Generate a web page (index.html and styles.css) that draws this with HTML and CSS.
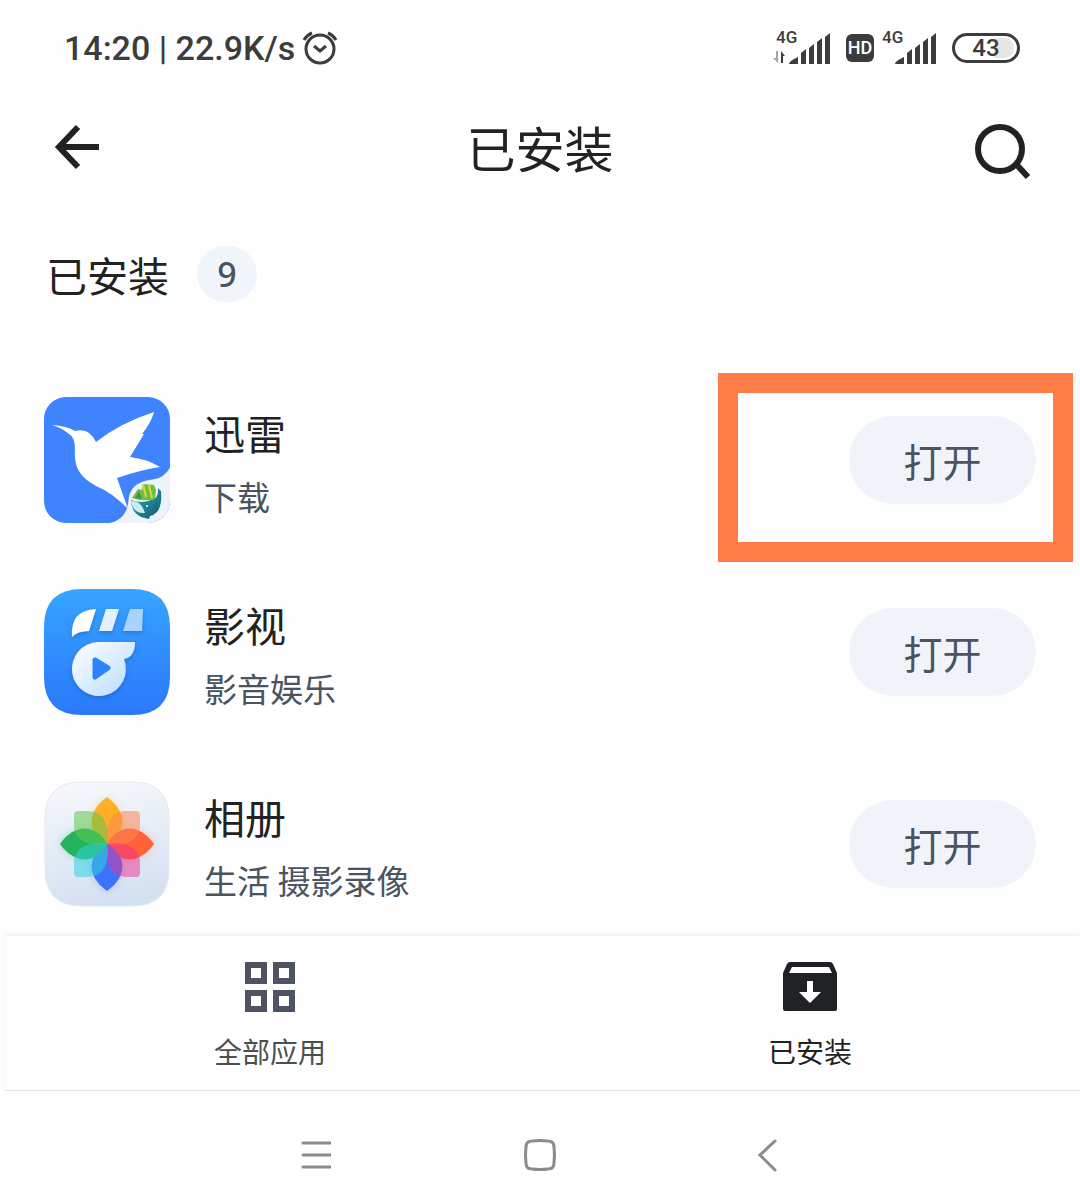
FILE: index.html
```html
<!DOCTYPE html>
<html lang="zh-CN">
<head>
  <meta charset="UTF-8">
  <meta name="viewport" content="width=device-width, initial-scale=1">
  <title>已安装</title>
  <link rel="stylesheet" href="styles.css">
</head>
<body>
  <div class="status">
    <div class="status-left">
      <span>14:20 | 22.9K/s</span>
      <svg width="36" height="36" viewBox="0 0 36 36" fill="none" stroke="#3c3c3c" stroke-width="3">
        <circle cx="18" cy="19" r="14"/>
        <path d="M12 16l6 5 6-5M2 10Q5 5 10 3M34 10Q31 5 26 3"/>
      </svg>
    </div>
    <div class="status-right">
      <div class="signal">
        <span>4G</span>
        <svg width="58" height="34" viewBox="0 0 58 34" fill="#3c3c3c">
          <path d="M17 33q0-3 9-7v7zM29 22l5-4v15h-5zM37 17l5-4v20h-5zM45 11l5-4v26h-5zM53 6l5-4v31h-5z"/>
          <path d="M9 32V20l4 5h-2v7z"/><path d="M6 20v12l-5-5h3v-7z" fill="#a5a5a5"/>
        </svg>
      </div>
      <span class="hd">HD</span>
      <div class="signal">
        <span>4G</span>
        <svg width="58" height="34" viewBox="0 0 58 34" fill="#3c3c3c">
          <path d="M17 33q0-3 9-7v7zM29 22l5-4v15h-5zM37 17l5-4v20h-5zM45 11l5-4v26h-5zM53 6l5-4v31h-5z"/>
        </svg>
      </div>
      <span class="battery">43</span>
    </div>
  </div>

  <header class="header">
    <button class="icon-btn" aria-label="返回">
      <svg width="60" height="60" viewBox="0 0 60 60" fill="none" stroke="#222" stroke-width="6">
        <path d="M32 7L13 27l19 20M13 27h40"/>
      </svg>
    </button>
    <h1>已安装</h1>
    <button class="icon-btn" aria-label="搜索">
      <svg width="60" height="60" viewBox="0 0 60 60" fill="none" stroke="#222" stroke-width="6">
        <circle cx="26" cy="29" r="22"/>
        <path d="M42 44l12 13"/>
      </svg>
    </button>
  </header>

  <main>
    <div class="section-title">
      <h2>已安装</h2>
      <span class="count">9</span>
    </div>

    <ul class="apps">
      <li class="app">
        <svg class="app-icon" viewBox="0 0 126 126">
          <defs>
            <clipPath id="c1"><rect width="126" height="126" rx="22"/></clipPath>
            <linearGradient id="whale" x1="0" y1="0" x2="1" y2="1">
              <stop offset="0" stop-color="#39b3b6"/><stop offset="1" stop-color="#0a5873"/>
            </linearGradient>
          </defs>
          <g clip-path="url(#c1)">
            <rect width="126" height="126" fill="#4083ff"/>
            <path d="M8 28Q23 29 31 34Q45 30 52 45Q76 26 110 15Q107 26 98 37L100 37L86 60Q103 62 116 70Q96 73 73 81L84 112Q69 96 52 89C34 79 30 68 31 53Q31 40 25 37Q18 31 8 28z" fill="#fff"/>
            <path d="M126 70Q120 81 109 82Q84 85 84 105Q82 123 64 126H126z" fill="#edf3f8"/>
            <path d="M126 70Q120 81 109 82Q84 85 84 105Q82 123 64 126" fill="none" stroke="#2b65c9" stroke-width="1" opacity=".5"/>
            <path d="M87 103Q98 107 107 103Q115 102 114 91L117 94Q119 116 106 119L105 122L97 120Q87 115 87 103z" fill="url(#whale)"/>
            <path d="M87 104Q97 103 101 116Q89 117 87 104z" fill="#c7edf4"/>
            <path d="M88 101L94 92L98 93L99 87L110 88L112 93L111 102Q100 105 88 101z" fill="#70bd40"/>
            <path d="M99 87l3 13M105 88l3 13" stroke="#d5d944" stroke-width="2"/>
            <path d="M91 101l4-7 3 8z" fill="#2e9b57"/>
            <circle cx="103" cy="109" r="1" fill="#fff"/>
          </g>
        </svg>
        <div class="info">
          <h3>迅雷</h3>
          <p>下载</p>
        </div>
        <div class="action">
          <button class="open">打开</button>
          <span class="highlight"></span>
        </div>
      </li>
      <li class="app">
        <svg class="app-icon" viewBox="0 0 126 126">
          <defs>
            <linearGradient id="bg2" x1="0" y1="0" x2="0" y2="1">
              <stop offset="0" stop-color="#37a4ff"/><stop offset="1" stop-color="#2b78fb"/>
            </linearGradient>
            <linearGradient id="w2" x1="0" y1="0" x2="1" y2="1">
              <stop offset="0" stop-color="#fff"/><stop offset="1" stop-color="#b5dcff"/>
            </linearGradient>
            <filter id="sh2" x="-20%" y="-20%" width="140%" height="140%">
              <feDropShadow dx="0" dy="2" stdDeviation="2" flood-color="#1556b8" flood-opacity=".5"/>
            </filter>
          </defs>
          <path d="M0 38Q0 0 38 0H88Q126 0 126 38V88Q126 126 88 126H38Q0 126 0 88z" fill="url(#bg2)"/>
          <g filter="url(#sh2)">
            <path d="M52 20L45 42Q33 42 28 48Q26 21 52 20z" fill="#fff"/>
            <path d="M62 20H75L68 42H55z" fill="#e3f1ff"/>
            <path d="M86 20H99L98 42H79z" fill="#a9d4ff"/>
            <path d="M54 53H91Q91 68 80 70A27 27 0 1 1 54 53z" fill="url(#w2)"/>
          </g>
          <path d="M51 71L64 79L51 88z" fill="#2e82fc" stroke="#2e82fc" stroke-width="5" stroke-linejoin="round"/>
        </svg>
        <div class="info">
          <h3>影视</h3>
          <p>影音娱乐</p>
        </div>
        <div class="action">
          <button class="open">打开</button>
        </div>
      </li>
      <li class="app">
        <svg class="app-icon" viewBox="0 0 126 126">
          <defs>
            <linearGradient id="bg3" x1=".4" y1="0" x2=".6" y2="1">
              <stop offset="0" stop-color="#f5f7fb"/><stop offset="1" stop-color="#d3e0f0"/>
            </linearGradient>
            <filter id="glow" x="-30%" y="-30%" width="160%" height="160%">
              <feGaussianBlur stdDeviation="5"/>
            </filter>
            <path id="petal" d="M63 63C43 52 42 31 63 16C84 31 83 52 63 63z"/>
            <path id="leaf" d="M30 34Q30 30 34 30H44C59 30 66 44 63 63C44 66 30 59 30 44z"/>
          </defs>
          <path d="M1 38Q1 1 38 1H88Q125 1 125 38V88Q125 125 88 125H38Q1 125 1 88z" fill="url(#bg3)" stroke="#e3e9f1"/>
          <g filter="url(#glow)" opacity=".3">
            <use href="#petal" fill="#f8b62f"/>
            <use href="#petal" fill="#ff6640" transform="rotate(90 63 63)"/>
            <use href="#petal" fill="#3f7aff" transform="rotate(180 63 63)"/>
            <use href="#petal" fill="#16b65c" transform="rotate(270 63 63)"/>
          </g>
          <use href="#petal" fill="#fbb025"/>
          <use href="#petal" fill="#ff6238" transform="rotate(90 63 63)"/>
          <use href="#petal" fill="#3b74fb" transform="rotate(180 63 63)"/>
          <use href="#petal" fill="#22b35c" transform="rotate(270 63 63)"/>
          <use href="#leaf" fill="#60c84e" opacity=".55"/>
          <use href="#leaf" fill="#ff8652" opacity=".55" transform="rotate(90 63 63)"/>
          <use href="#leaf" fill="#f02f92" opacity=".5" transform="rotate(180 63 63)"/>
          <use href="#leaf" fill="#33cfe0" opacity=".55" transform="rotate(270 63 63)"/>
        </svg>
        <div class="info">
          <h3>相册</h3>
          <p>生活 摄影录像</p>
        </div>
        <div class="action">
          <button class="open">打开</button>
        </div>
      </li>
    </ul>
  </main>

  <nav class="tabs">
    <a class="tab" href="#all">
      <svg width="56" height="52" viewBox="0 0 56 52" fill="none" stroke="#4d5363" stroke-width="6">
        <path d="M6 4h16v16H6zM34 4h16v16H34zM6 32h16v16H6zM34 32h16v16H34z"/>
      </svg>
      <span>全部应用</span>
    </a>
    <a class="tab active" href="#installed">
      <svg width="56" height="52" viewBox="0 0 56 52">
        <path fill="#1f2124" fill-rule="evenodd" d="M8 1H48Q50 1 51 3L55 12V48Q55 50 53 50H3Q1 50 1 48V12L5 3Q6 1 8 1zM10 6L7 12H50L47 6zM25 20V31H17L28 42L39 31H31V20z"/>
      </svg>
      <span>已安装</span>
    </a>
  </nav>

  <div class="sysnav">
    <button aria-label="菜单">
      <svg width="36" height="36" viewBox="0 0 36 36"><path d="M8 6h28M8 18h28M8 30h28"/></svg>
    </button>
    <button aria-label="主页">
      <svg width="36" height="36" viewBox="0 0 36 36"><path d="M10 4Q18 3 26 4Q32 4 32 10Q33 18 32 26Q32 32 26 32Q18 33 10 32Q4 32 4 26Q3 18 4 10Q4 4 10 4z"/></svg>
    </button>
    <button aria-label="返回">
      <svg width="36" height="36" viewBox="0 0 36 36"><path d="M26 4L11 18l15 15"/></svg>
    </button>
  </div>
</body>
</html>
```
FILE: styles.css
```css
* { box-sizing: border-box; }
body { margin: 0; min-height: 100vh; display: flex; flex-direction: column; background: #fefefe; color: #222; font-family: "Noto Sans CJK SC", sans-serif; }
h1, h2, h3, p, ul { margin: 0; padding: 0; font-weight: 400; }
ul { list-style: none; }
button { border: 0; padding: 0; background: none; font-family: inherit; cursor: pointer; }
svg { display: block; flex: none; }

.status { display: flex; justify-content: space-between; align-items: center; height: 96px; padding: 0 60px 0 64px; color: #3c3c3c; font-family: Roboto, sans-serif; font-weight: 500; }
.status-left { display: flex; align-items: center; gap: 7px; font-size: 34px; }
.status-right { display: flex; align-items: center; gap: 16px; }
.signal { position: relative; }
.signal span { position: absolute; left: 4px; top: -2px; font-size: 17px; line-height: 16px; }
.hd { width: 28px; margin-right: -12px; border-radius: 6px; background: #3c3c3c; color: #fff; font-size: 18px; line-height: 28px; text-align: center; }
.battery { width: 68px; border: 3px solid #3c3c3c; border-radius: 15px; background: linear-gradient(to right, #fff 65%, #e6e6e6 65%) content-box; padding: 2px 3px; font-size: 24px; line-height: 20px; text-align: center; }

.header { display: flex; justify-content: space-between; align-items: center; height: 108px; padding: 0 46px; }
.header h1 { padding-bottom: 6px; font-size: 49px; line-height: 72px; }
.icon-btn { width: 60px; height: 60px; }

.section-title { display: flex; align-items: center; gap: 28px; height: 140px; padding: 0 46px; }
h2 { font-size: 41px; line-height: 60px; }
.count { width: 60px; border-radius: 28px; background: #f0f4fb; color: #4a5460; font-family: "Noto Sans", sans-serif; font-size: 34px; font-weight: 500; line-height: 56px; text-align: center; }

.apps { display: flex; flex-direction: column; gap: 66px; padding: 53px 44px 29px; }
.app { display: flex; align-items: center; gap: 34px; height: 126px; }
.app-icon { width: 126px; height: 126px; }
.info { flex: 1; padding-top: 8px; }
.info h3 { font-size: 41px; line-height: 64px; }
.info p { color: #4a5460; font-size: 33px; line-height: 64px; }
.action { position: relative; }
.open { display: block; width: 187px; height: 88px; border-radius: 44px; background: #f0f4fa; color: #4a5460; font-size: 39px; }
.highlight { position: absolute; inset: -43px -37px -58px -131px; border: 20px solid #ff7d47; pointer-events: none; }

.tabs { display: flex; height: 155px; margin-left: 5px; border-bottom: 1px solid #e4e4e4; box-shadow: 0 -2px 4px rgba(0, 0, 0, 0.06); }
.tab { flex: 1; display: flex; flex-direction: column; align-items: center; gap: 18px; padding-top: 25px; color: #4a5050; font-size: 28px; line-height: 40px; text-decoration: none; }
.tab:first-child { margin-left: -5px; }
.tab.active { color: #222; }

.sysnav { flex: 1; display: flex; justify-content: center; align-items: center; padding-top: 14px; }
.sysnav button { display: flex; justify-content: center; width: 21%; }
.sysnav path { fill: none; stroke: #8b8b8b; stroke-width: 3; stroke-linecap: round; }
```
